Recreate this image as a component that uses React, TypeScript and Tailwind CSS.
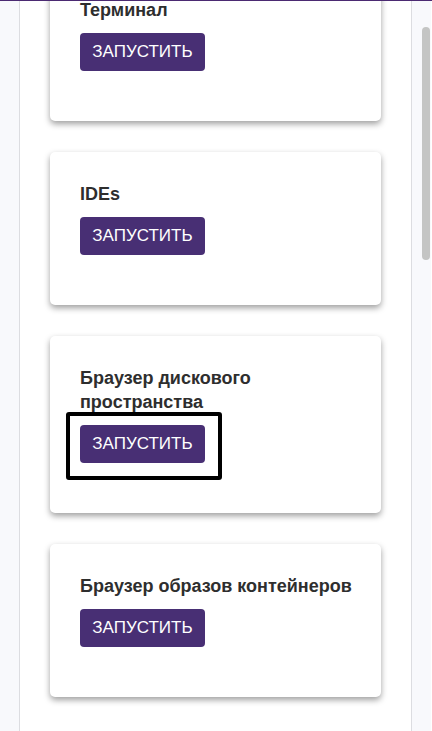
import React from "react";

function Card({ title, highlight }: { title: string; highlight?: boolean }) {
  return (
    <div className="bg-white rounded-[5px] shadow-[0_3px_6px_rgba(0,0,0,0.38)] pt-[30px] pb-[50px] pl-[30px] pr-[16px]">
      <div className="text-[18px] leading-[24px] font-bold text-[#2e2e2e]">{title}</div>
      <div className="relative mt-[11px] w-[125px]">
        <button className="w-[125px] h-[38px] rounded-[4px] bg-[#482f74] text-white text-[17px] leading-[38px] font-normal uppercase text-center">
          ЗАПУСТИТЬ
        </button>
        {highlight && (
          <div className="absolute left-[-14px] top-[-13px] w-[156px] h-[68px] border-[4px] border-black rounded-[3px] pointer-events-none" />
        )}
      </div>
    </div>
  );
}

export default function App() {
  return (
    <div
      className="w-[432px] h-[731px] overflow-hidden flex flex-col bg-white"
      style={{ fontFamily: '"Liberation Sans", Arial, sans-serif' }}
    >
      <div className="h-[1px] bg-[#4b2a72] shrink-0" />
      <div className="flex flex-1 min-h-0">
        <div className="w-[19px] bg-[#f8f9fc] border-r border-[#dcdde1] box-content shrink-0" />
        <div className="w-[391px] overflow-hidden bg-white shrink-0">
          <div className="mt-[-33px] px-[30px] flex flex-col gap-[31px]">
            <Card title="Терминал" />
            <Card title="IDEs" />
            <Card title="Браузер дискового пространства" highlight />
            <Card title="Браузер образов контейнеров" />
          </div>
        </div>
        <div className="w-[20px] bg-[#f8f9fc] border-l border-[#dcdde1] shrink-0 box-border">
          <div className="ml-[10px] mt-[26px] w-[8px] h-[233px] rounded-full bg-[#c4c5c4]" />
        </div>
      </div>
    </div>
  );
}
